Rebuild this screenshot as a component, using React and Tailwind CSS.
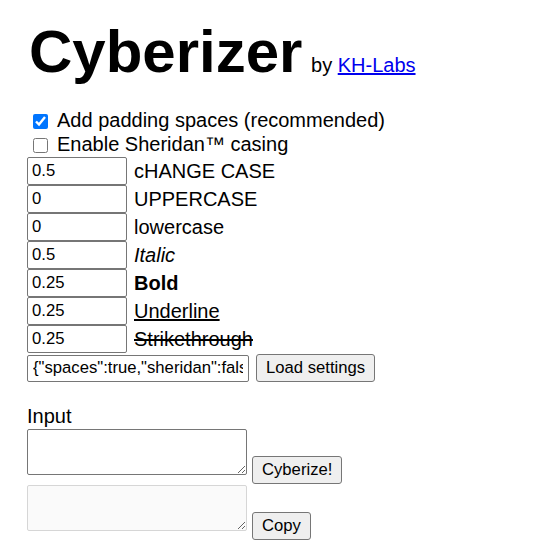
import React from 'react';

const settings =
  '{"spaces":true,"sheridan":false,"change":0.5,"upper":0,"lower":0,"italic":0.5,"bold":0.25,"underline":0.25,"strike":0.25}';

const weights = [
  { value: '0.5', label: 'cHANGE CASE', className: '' },
  { value: '0', label: 'UPPERCASE', className: '' },
  { value: '0', label: 'lowercase', className: '' },
  { value: '0.5', label: 'Italic', className: 'italic' },
  { value: '0.25', label: 'Bold', className: 'font-bold' },
  { value: '0.25', label: 'Underline', className: 'underline' },
  { value: '0.25', label: 'Strikethrough', className: 'line-through' },
];

const Button = ({ children, className = '' }) => (
  <button
    className={`h-[28px] px-[9px] bg-[#efefef] border border-[#767676] rounded-[3px] text-[16.67px] text-black leading-none ${className}`}
  >
    {children}
  </button>
);

const App = () => {
  return (
    <div className="min-h-screen bg-white text-black pl-[27px] font-['Liberation_Sans',Arial,sans-serif]">
      {/* Title */}
      <div className="pt-[17px] pl-[2px] h-[86px] text-[60px] leading-[69px] whitespace-nowrap">
        <span className="font-bold">Cyberizer</span>
        <span className="text-[20px] leading-none pl-[3px]">
          {' '}by{' '}
          <a href="#" className="text-[#0000ee] underline">KH-Labs</a>
        </span>
      </div>

      {/* Options */}
      <div className="mt-[22px] text-[20px] leading-[24px]">
        <label className="flex items-center h-[24px]">
          <input type="checkbox" defaultChecked className="w-[15px] h-[15px] ml-[6px] mr-[9px] mt-[2px] accent-[#0075ff]" />
          Add padding spaces (recommended)
        </label>
        <label className="flex items-center h-[24px]">
          <input type="checkbox" className="w-[15px] h-[15px] ml-[6px] mr-[9px] mt-[2px]" />
          Enable Sheridan™ casing
        </label>
      </div>

      {/* Weights */}
      <div className="mt-[1px] flex flex-col">
        {weights.map((w) => (
          <div key={w.label} className="flex items-center h-[28px]">
            <input
              type="text"
              defaultValue={w.value}
              className="w-[100px] h-[28px] px-[4px] border border-[#767676] rounded-[2px] text-[16.67px] text-black bg-white"
            />
            <span className={`ml-[7px] text-[20px] ${w.className}`}>{w.label}</span>
          </div>
        ))}
      </div>

      {/* Settings */}
      <div className="mt-[1px] flex items-center gap-[7px]">
        <input
          type="text"
          readOnly
          defaultValue={settings}
          className="w-[222px] h-[27px] px-[5px] border border-[#767676] rounded-[2px] text-[16.67px] text-black bg-white"
        />
        <Button className="h-[27px]">Load settings</Button>
      </div>

      {/* Input / output */}
      <div className="mt-[23px] text-[20px] leading-[23px]">Input</div>
      <div className="mt-[1px] flex items-start gap-[5px]">
        <textarea className="w-[220px] h-[46px] border border-[#767676] rounded-[2px] bg-white" />
        <Button className="mt-[27px]">Cyberize!</Button>
      </div>
      <div className="mt-[1px] flex items-start gap-[5px]">
        <textarea disabled className="w-[220px] h-[46px] border border-[#d6d6d6] rounded-[2px] bg-[#fafafa]" />
        <Button className="mt-[27px]">Copy</Button>
      </div>
    </div>
  );
};

export default App;
